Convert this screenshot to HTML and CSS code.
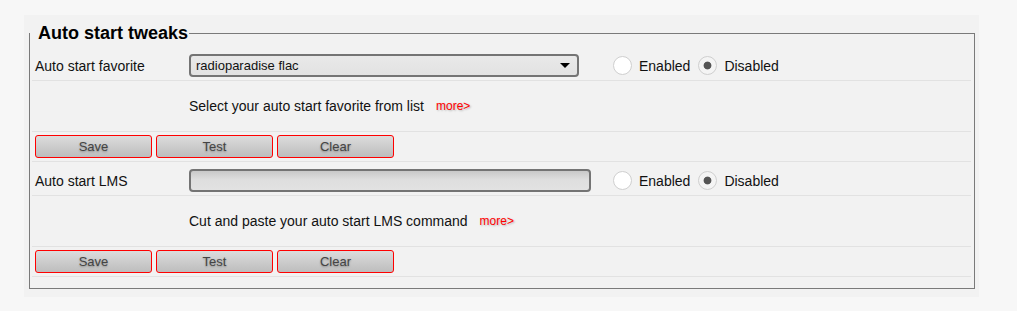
FILE: index.html
```html
<!DOCTYPE html>
<html>
<head>
<meta charset="utf-8">
<link rel="stylesheet" href="styles.css">
</head>
<body>
<div class="panel">
  <fieldset class="tweaks">
    <legend>Auto start tweaks</legend>

    <div class="row field-row">
      <div class="label">Auto start favorite</div>
      <span class="select-wrap">
        <select class="select"><option>radioparadise flac</option></select>
        <span class="arrow"></span>
      </span>
      <label class="radio"><input type="radio" name="fav"> <span>Enabled</span></label>
      <label class="radio"><input type="radio" name="fav" checked> <span>Disabled</span></label>
    </div>
    <div class="row desc-row">
      <div class="label"></div>
      <span class="desc">Select your auto start favorite from list</span>
      <a class="more">more&gt;</a>
    </div>
    <div class="row btn-row">
      <button class="btn">Save</button>
      <button class="btn">Test</button>
      <button class="btn">Clear</button>
    </div>

    <div class="row field-row">
      <div class="label">Auto start LMS</div>
      <input class="text" type="text">
      <label class="radio"><input type="radio" name="lms"> <span>Enabled</span></label>
      <label class="radio"><input type="radio" name="lms" checked> <span>Disabled</span></label>
    </div>
    <div class="row desc-row">
      <div class="label"></div>
      <span class="desc">Cut and paste your auto start LMS command</span>
      <a class="more">more&gt;</a>
    </div>
    <div class="row btn-row">
      <button class="btn">Save</button>
      <button class="btn">Test</button>
      <button class="btn">Clear</button>
    </div>
  </fieldset>
</div>
</body>
</html>
```

FILE: styles.css
```css
html, body {
  margin: 0;
  padding: 0;
  background: #f7f7f7;
  font-family: "Liberation Sans", Arial, sans-serif;
  color: #111;
}

.panel {
  margin: 15px 0 0 24px;
  width: 955px;
  height: 282px;
  background: #f2f2f2;
  box-sizing: border-box;
  padding: 0 4px 0 5px;
}

.tweaks {
  margin: 0;
  border: 1px solid #7a7a7a;
  padding: 3px 3px 11px 2px;
  position: relative;
  top: 8px;
}

.tweaks legend {
  font-size: 18px;
  font-weight: bold;
  color: #000;
  padding: 0 1px 0 8px;
  margin-left: -2px;
  line-height: 21px;
}

.row {
  display: flex;
  align-items: center;
  border-bottom: 1px solid #e2e2e2;
  padding-left: 3px;
  font-size: 14px;
}

.field-row {
  box-sizing: border-box;
  padding-top: 4px;
  height: 34px;
}

.desc-row {
  height: 51px;
  box-sizing: border-box;
}

.btn-row {
  height: 30px;
  box-sizing: border-box;
  gap: 4px;
}

.label {
  width: 154px;
  flex: none;
}

.select-wrap {
  position: relative;
  display: inline-block;
  width: 390px;
  height: 23px;
  margin-right: 34px;
}

.select {
  appearance: none;
  -webkit-appearance: none;
  width: 100%;
  height: 100%;
  box-sizing: border-box;
  border: 2px solid #747474;
  border-radius: 4px;
  background: linear-gradient(#e9e9e9, #e2e2e2);
  font-family: "Liberation Sans", Arial, sans-serif;
  font-size: 13px;
  color: #111;
  padding: 0 0 0 5px;
  margin: 0;
}

.arrow {
  position: absolute;
  right: 9px;
  top: 9px;
  width: 0;
  height: 0;
  border-left: 5px solid transparent;
  border-right: 5px solid transparent;
  border-top: 5px solid #000;
}

.text {
  width: 402px;
  height: 23px;
  box-sizing: border-box;
  border: 2px solid #747474;
  border-radius: 4px;
  background: linear-gradient(#c9c9c9, #dedede 45%, #e2e2e2);
  margin: 0 22px 0 0;
  padding: 0 5px;
}

.radio {
  display: inline-flex;
  align-items: center;
  margin-right: 8px;
  color: #111;
}

.radio input {
  appearance: none;
  -webkit-appearance: none;
  width: 19px;
  height: 19px;
  margin: 0 7px 0 0;
  border: 1px solid #cfcfcf;
  border-radius: 50%;
  background: #fff;
  box-sizing: border-box;
  position: relative;
}

.radio input:checked {
  background: radial-gradient(circle, #555 0, #555 3.5px, #f4f4f4 4.3px);
}

.desc {
  color: #111;
}

.more {
  margin-left: 12px;
  font-size: 12px;
  color: #f00;
  text-shadow: 1px 1px 2px rgba(0, 0, 0, 0.25);
}

.btn {
  width: 117px;
  height: 23px;
  box-sizing: border-box;
  border: 1px solid #f00;
  border-radius: 3px;
  background: linear-gradient(#dcdcdc, #bdbdbd);
  font-family: "Liberation Sans", Arial, sans-serif;
  font-size: 13px;
  color: #444;
  text-shadow: 0 1px 2px rgba(0, 0, 0, 0.3);
  padding: 0;
  margin: 0;
}
```
